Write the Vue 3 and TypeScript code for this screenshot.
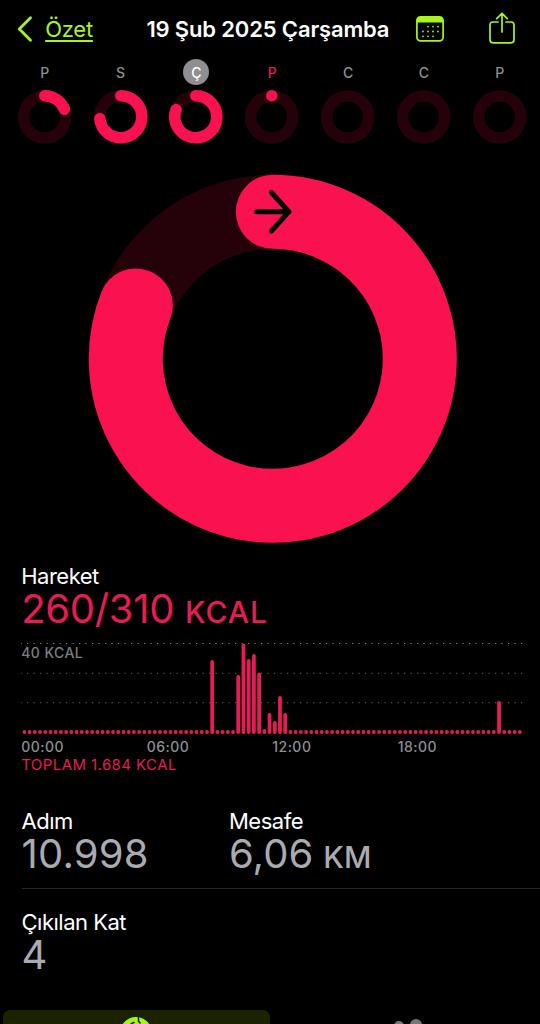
<script setup lang="ts">
interface Day {
  letter: string
  degrees: number | null
  state?: 'selected' | 'today'
}

const days: Day[] = [
  { letter: 'P', degrees: 69 },
  { letter: 'S', degrees: 265 },
  { letter: 'Ç', degrees: 290, state: 'selected' },
  { letter: 'P', degrees: 0.1, state: 'today' },
  { letter: 'C', degrees: null },
  { letter: 'C', degrees: null },
  { letter: 'P', degrees: null },
]

function arc(c: number, r: number, degrees: number): string {
  const a = (degrees * Math.PI) / 180
  const x = c + r * Math.sin(a)
  const y = c - r * Math.cos(a)
  return `M${c} ${c - r}A${r} ${r} 0 ${degrees > 180 ? 1 : 0} 1 ${x.toFixed(3)} ${y.toFixed(3)}`
}

// Quarter-hour energy readings, as bar heights
const peaks: Record<number, number> = {
  36: 74, 41: 59, 42: 90.5, 43: 75, 44: 80, 45: 61.5,
  46: 5, 47: 21, 48: 13, 49: 38, 50: 21, 91: 33,
}
const bars = Array.from({ length: 96 }, (_, i) => ({
  x: 1.5 + i * 5.216,
  h: peaks[i] ?? 4,
}))
const hours = ['00:00', '06:00', '12:00', '18:00']
</script>

<template>
  <main class="screen">
    <header class="bar">
      <a class="back">
        <svg width="16" height="26" viewBox="0 0 16 26"><path d="M13.5 1.7 2.3 13l11.2 11.2" /></svg>
        <span>Özet</span>
      </a>
      <h1>19 Şub 2025 Çarşamba</h1>
      <svg class="calendar" width="28" height="26" viewBox="0 0 28 26">
        <rect x="0.9" y="0.9" width="26.2" height="24" rx="3.6" />
        <path class="fill" d="M1 6.4V4Q1 1 4 1H24Q27 1 27 4V6.4Z" />
        <path class="dots" d="M12 10.6h.01M17 10.6h.01M22 10.6h.01M7 15.5h.01M12 15.5h.01M17 15.5h.01M22 15.5h.01M7 20.3h.01M12 20.3h.01M17 20.3h.01" />
      </svg>
      <svg class="share" width="26" height="32" viewBox="0 0 26 32">
        <path d="M9 10H4Q1 10 1 13V27.8Q1 30.8 4 30.8H22Q25 30.8 25 27.8V13Q25 10 22 10H17M13 20V1.6M7.7 6.6 13 1.3l5.3 5.3" />
      </svg>
    </header>

    <section class="week">
      <div v-for="(day, i) in days" :key="i" class="day" :class="day.state">
        <span class="letter">{{ day.letter }}</span>
        <svg width="54" height="54" viewBox="0 0 54 54">
          <circle class="track" cx="26.7" cy="27" r="21" />
          <path v-if="day.degrees !== null" class="progress" :d="arc(26.8, 21, day.degrees)" />
        </svg>
      </div>
    </section>

    <svg class="ring" width="370" height="370" viewBox="0 0 370 370">
      <circle class="track" cx="184.8" cy="184.8" r="147" />
      <path class="progress" :d="arc(184.8, 147, 291.3)" />
      <path class="arrow" d="M168.7 37.7H201M183.5 18.5l17.4 19.2L183.5 57.1" />
    </svg>

    <section class="move">
      <h2>Hareket</h2>
      <p class="value">260/310 <small>KCAL</small></p>
      <div class="chart">
        <svg width="502" height="94" viewBox="0 0 502 94">
          <path class="grid top" d="M-.5 2.5H501.5" />
          <path class="grid" d="M-.5 32.3H501.5M-.5 61.7H501.5" />
          <rect v-for="(b, i) in bars" :key="i" class="energy" :x="b.x" :y="93 - b.h" width="3.8" :height="b.h" rx="1.9" />
        </svg>
        <span class="scale">40 KCAL</span>
      </div>
      <div class="hours"><span v-for="h in hours" :key="h">{{ h }}</span></div>
      <p class="total">TOPLAM 1.684 KCAL</p>
    </section>

    <section class="stats">
      <div class="stat">
        <h2>Adım</h2>
        <p class="value steps">10.998</p>
      </div>
      <div class="stat">
        <h2>Mesafe</h2>
        <p class="value distance">6,06 <small>KM</small></p>
      </div>
    </section>
    <section class="stats floors">
      <div class="stat">
        <h2>Çıkılan Kat</h2>
        <p class="value">4</p>
      </div>
    </section>

    <nav class="tabs">
      <div class="tab active">
        <svg width="32" height="32" viewBox="0 0 32 32">
          <circle cx="16" cy="16" r="12.5" />
          <path d="M18.5 0v4.2l2 2.3M10.5 7l4-1.8" />
        </svg>
      </div>
      <div class="tab">
        <svg width="36" height="24" viewBox="0 0 36 24">
          <circle cx="10" cy="8" r="5" /><circle cx="27" cy="7" r="6" />
        </svg>
      </div>
    </nav>
  </main>
</template>

<style>
html, body { margin: 0; background: #000; }
</style>

<style scoped>
.screen {
  width: 540px;
  height: 1024px;
  overflow: hidden;
  display: flex;
  flex-direction: column;
  background: #000;
  color: #fff;
  font-family: Inter, "Liberation Sans", sans-serif;
}
h1, h2, p { margin: 0; font-weight: 400; white-space: nowrap; }
svg { display: block; flex: none; fill: none; }
.bar { display: flex; height: 60px; flex: none; padding-left: 17px; align-items: flex-start; }
.back { display: flex; flex: none; width: 129.4px; padding-top: 16px; color: #a8f51e; }
.back svg { stroke: #a8f51e; stroke-width: 2.8; stroke-linecap: round; stroke-linejoin: round; }
.back span { margin: -2px 0 0 12.2px; font-size: 22px; line-height: 30px; letter-spacing: -.25px; text-decoration: underline; text-decoration-thickness: 1.5px; text-underline-offset: 3px; }
h1 { width: 269.4px; flex: none; padding-top: 14px; font-size: 22px; font-weight: 600; line-height: 30px; letter-spacing: -.15px; }
.calendar { margin-top: 16px; stroke: #a8f51e; stroke-width: 1.7; }
.calendar .fill { fill: #a8f51e; stroke: none; }
.calendar .dots { stroke-width: 1.8; stroke-linecap: round; }
.share { margin: 12px 0 0 45.5px; stroke: #a8f51e; stroke-width: 1.7; stroke-linecap: round; stroke-linejoin: round; }
.week { display: flex; height: 90px; flex: none; margin: -1px 0 0 6.8px; }
.day { width: 75.85px; flex: none; display: flex; flex-direction: column; align-items: center; color: #8e8e93; }
.letter { width: 26px; height: 26px; border-radius: 50%; text-align: center; font-size: 14px; line-height: 27px; font-weight: 500; margin-bottom: 5.3px; }
.selected .letter { background: #8e8e93; color: #fff; }
.today .letter { color: #e51c55; }
.track { stroke: #25010a; stroke-width: 11.5; }
.progress { stroke: #fa1150; stroke-width: 11.5; stroke-linecap: round; }
.ring { margin: 25px 0 0 88px; }
.ring .track, .ring .progress { stroke-width: 74; }
.arrow { stroke: #000; stroke-width: 5; stroke-linecap: round; stroke-linejoin: round; }
h2 { font-size: 22px; line-height: 25px; letter-spacing: -.5px; }
.value { font-size: 40px; line-height: 40px; letter-spacing: -.3px; }
.value small { font-size: 30px; font-weight: 500; letter-spacing: .3px; }
.move { margin: 20px 0 0 21.2px; }
.move .value { color: #e51c55; }
.move .value small { letter-spacing: .9px; }
.chart { position: relative; margin-top: 9px; }
.grid { stroke: #505052; stroke-width: 1.2; stroke-dasharray: 1.2 5.3; }
.grid.top { stroke: #858587; }
.energy { fill: #e51c55; }
.scale { position: absolute; left: 0; top: 3px; font-size: 14px; line-height: 18px; font-weight: 500; color: #7d7d82; letter-spacing: .45px; }
.hours { display: flex; margin-top: 3px; font-size: 14px; line-height: 18px; font-weight: 500; letter-spacing: .5px; color: #8e8e93; }
.hours span { width: 125.5px; }
.total { font-size: 15px; line-height: 18px; color: #e51c55; letter-spacing: .42px; }
.stats { display: flex; margin: 35px 0 0 21.5px; height: 79px; flex: none; border-bottom: 1px solid #252527; }
.stat { width: 207.5px; }
.stats .value { color: #aaabb1; }
.stats .steps { letter-spacing: .2px; }
.stats .distance { letter-spacing: .1px; word-spacing: -1.5px; }
.stats .distance small { letter-spacing: 0; }
.stats.floors { margin-top: 21px; border: 0; }
.tabs { display: flex; height: 14px; padding-left: 3px; margin-top: auto; flex: none; }
.tab { width: 267px; height: 90px; flex: none; display: flex; justify-content: center; align-items: flex-start; }
.tab.active { background: #1a2200; border-radius: 7px; }
.tab.active svg { margin: 7px 2px 0 0; stroke: #a8f51e; stroke-width: 7; }
.tab.active path { stroke: #1a2200; stroke-width: 1.5; }
.tab:last-child svg { margin: 8px 0 0 6px; fill: #77777a; }
</style>
